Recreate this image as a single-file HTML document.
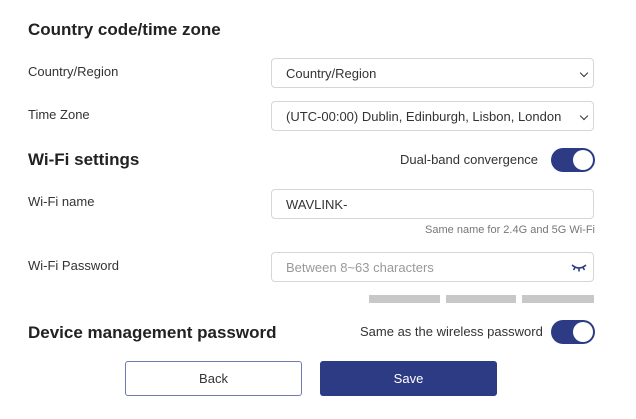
<!DOCTYPE html>
<html><head><style>
body{margin:0;width:636px;height:419px;background:#fff;font-family:"Liberation Sans",sans-serif;color:#333;position:relative;overflow:hidden}
.a{position:absolute}
.h{font-weight:bold;font-size:17px;color:#222}
.l{font-size:13px;color:#333}
.box{position:absolute;border:1px solid #d6d6d6;border-radius:4px;box-sizing:border-box;font-size:13px;color:#333;padding-left:14px;display:flex;align-items:center}
.chev{position:absolute;right:6px;top:11px;width:5px;height:5px;border-right:1.6px solid #333;border-bottom:1.6px solid #333;transform:rotate(45deg)}
.tg{position:absolute;width:44px;height:24px;border-radius:12px;background:#2d3b85}
.tg::after{content:"";position:absolute;right:2px;top:2px;width:20px;height:20px;border-radius:50%;background:#fff}
.bar{position:absolute;top:295px;height:8px;background:#c8c8c8}
.btn{position:absolute;top:361px;height:35px;width:177px;border-radius:3px;box-sizing:border-box;font-size:13px;display:flex;align-items:center;justify-content:center}
</style></head><body>
<div class="a h" style="left:28px;top:20px">Country code/time zone</div>
<div class="a l" style="left:28px;top:64px">Country/Region</div>
<div class="box" style="left:271px;top:58px;width:323px;height:30px">Country/Region<span class="chev"></span></div>
<div class="a l" style="left:28px;top:107px">Time Zone</div>
<div class="box" style="left:271px;top:101px;width:323px;height:30px">(UTC-00:00) Dublin, Edinburgh, Lisbon, London<span class="chev"></span></div>
<div class="a h" style="left:28px;top:150px">Wi-Fi settings</div>
<div class="a l" style="left:400px;top:152px">Dual-band convergence</div>
<div class="tg" style="left:551px;top:148px"></div>
<div class="a l" style="left:28px;top:194px">Wi-Fi name</div>
<div class="box" style="left:271px;top:189px;width:323px;height:30px">WAVLINK-</div>
<div class="a" style="right:41px;top:224px;font-size:11px;color:#777">Same name for 2.4G and 5G Wi-Fi</div>
<div class="a l" style="left:28px;top:258px">Wi-Fi Password</div>
<div class="box" style="left:271px;top:252px;width:323px;height:30px;color:#999">Between 8~63 characters
<svg class="a" style="right:6px;top:10px" width="16" height="10" viewBox="0 0 16 10"><path d="M1 2Q8 8 15 2M4 4.5L2.5 7M8 5.5V8.5M12 4.5L13.5 7" stroke="#2d3b85" stroke-width="1.6" fill="none"/></svg></div>
<div class="bar" style="left:369px;width:71px"></div>
<div class="bar" style="left:446px;width:70px"></div>
<div class="bar" style="left:522px;width:72px"></div>
<div class="a h" style="left:28px;top:323px;font-size:17px">Device management password</div>
<div class="a l" style="left:360px;top:324px">Same as the wireless password</div>
<div class="tg" style="left:551px;top:320px"></div>
<div class="btn" style="left:125px;border:1.5px solid #6f7ab0;color:#333">Back</div>
<div class="btn" style="left:320px;background:#2d3b85;color:#fff">Save</div>
</body></html>
